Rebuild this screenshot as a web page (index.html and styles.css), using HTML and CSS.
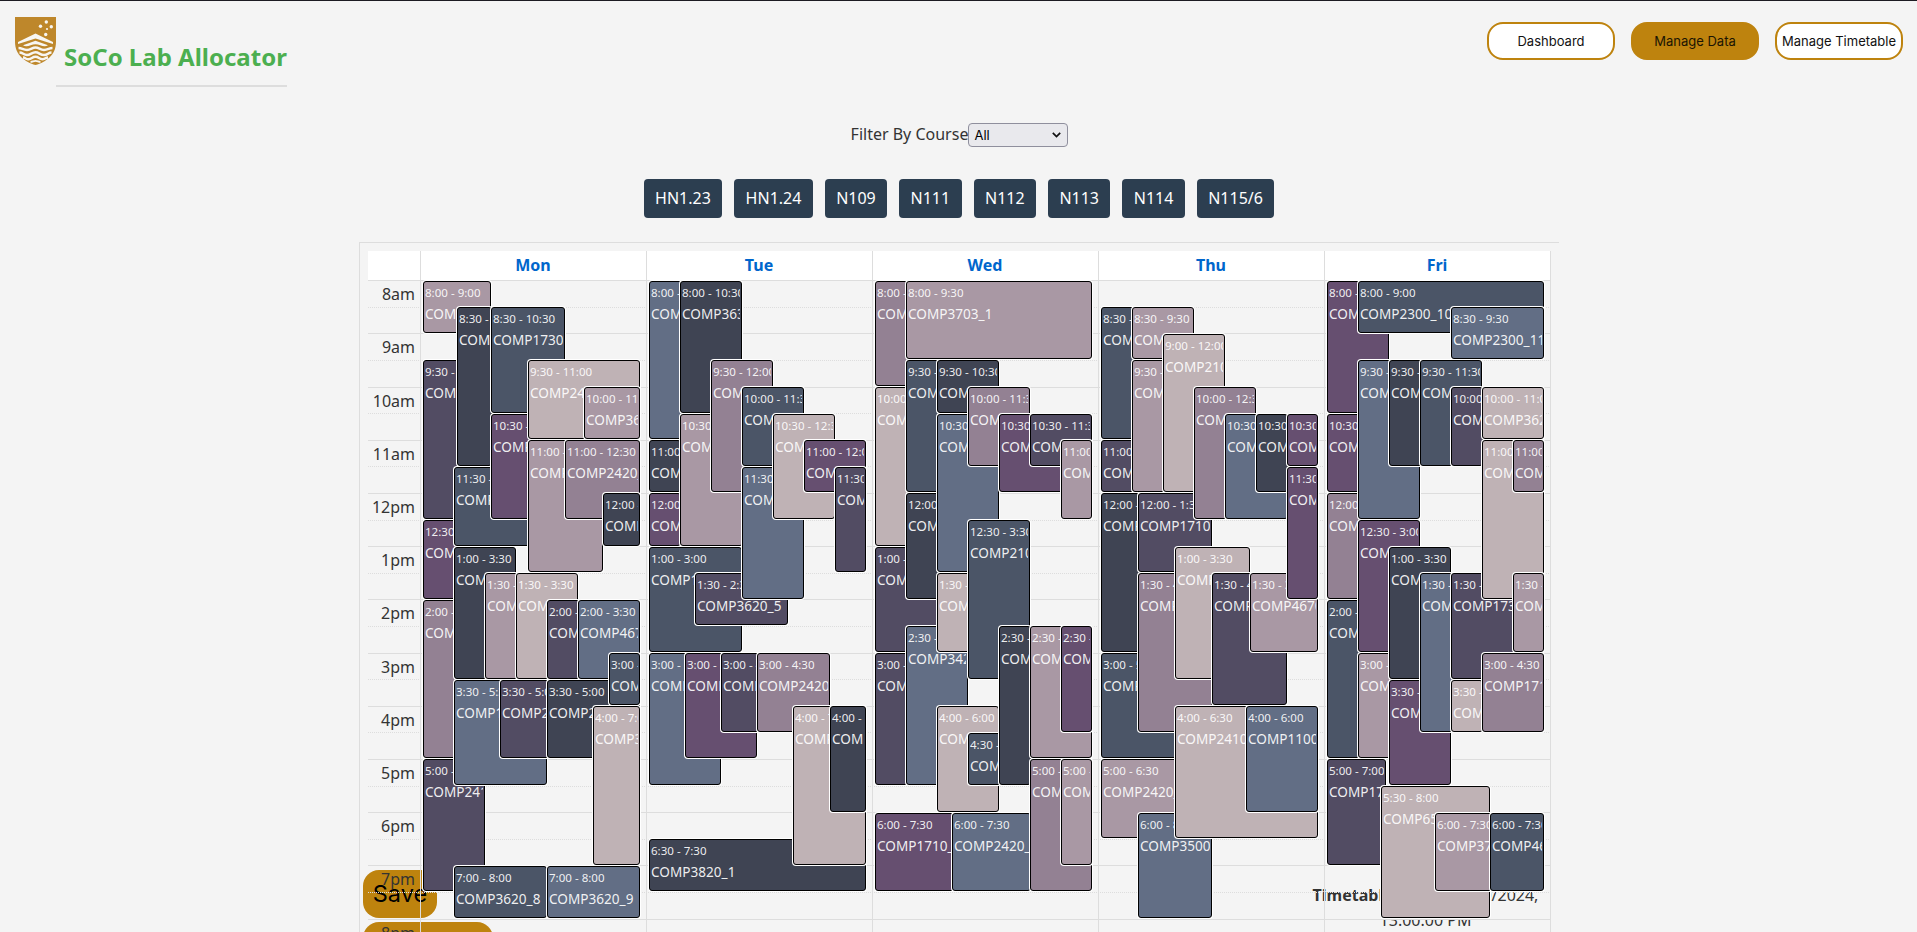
FILE: index.html
```html
<!DOCTYPE html>
<html lang="en">
<head>
<meta charset="utf-8">
<title>SoCo Lab Allocator</title>
<link rel="stylesheet" href="styles.css">
</head>
<body>
<header class="topbar">
  <svg class="logo" viewBox="0 0 41 48" width="41" height="48" aria-hidden="true">
    <path d="M0 0H41V25C41 38 31 45 20.5 48C10 45 0 38 0 25Z" fill="#be872b"/>
    <g fill="#f8f6f2">
      <circle cx="31.3" cy="5" r="1.7"/><circle cx="25.5" cy="9.2" r="1.7"/><circle cx="36.3" cy="9.8" r="1.7"/><circle cx="32" cy="12" r="1.1"/><circle cx="30.7" cy="17.5" r="1.7"/>
      <path d="M20.5 16.5L38 25V27L30 24.5L20.5 21.5L11 24.5L3 27V25Z"/>
      <path d="M8 28.200L20.500 23.800L33 28.200C29 31 25 27.200 20.500 27.200S12 31 8 28.200Z"/>
    </g>
    <g fill="none" stroke="#f8f6f2" stroke-width="2.5" stroke-linejoin="round">
      <path d="M3.5 31C7 31 8 33 12 33S17 30.500 20.500 30.500S25 33 29 33S34 31 37.500 31"/>
      <path d="M4.500 35.500C8 35.500 8.500 38 12 38S17 35.300 20.500 35.300S25 38 29 38S33 35.500 36.500 35.500"/>
      <path d="M8 40.500C11 40.500 10 42.500 13.500 42.200S17 39.800 20.500 39.800S24 42.200 27.500 42.200S30 40.500 33 40.500"/>
      <path d="M15.500 44.800C18 44.800 18 43.800 20.500 43.800S23 44.800 25.500 44.800" stroke-width="1.800"/>
    </g>
  </svg>
  <h1 class="brand">SoCo Lab Allocator</h1>
  <nav class="nav">
    <button class="nav-btn">Dashboard</button>
    <button class="nav-btn active">Manage Data</button>
    <button class="nav-btn">Manage Timetable</button>
  </nav>
</header>
<div class="filter">
  <span class="filter-label">Filter By Course</span>
  <div class="select"><span>All</span><svg width="9" height="6" viewBox="0 0 9 6"><path d="M.8 .8L4.500 4.600L8.200 .8" fill="none" stroke="#111" stroke-width="1.700"/></svg></div>
</div>
<div class="rooms">
  <button class="room">HN1.23</button><button class="room">HN1.24</button><button class="room">N109</button><button class="room">N111</button><button class="room">N112</button><button class="room">N113</button><button class="room">N114</button><button class="room">N115/6</button>
</div>
<main class="stage">
  <div class="save-btn">Save</div>
  <div class="save-btn second"></div>
  <div class="stamp"><b>Timetable</b> saved: 10/10/2024,<br>13:00:00 PM</div>
  <section class="calendar">
    <div class="head">
      <div class="axis-head"></div><div>Mon</div><div>Tue</div><div>Wed</div><div>Thu</div><div>Fri</div>
    </div>
    <div class="body">
      <div class="slots" id="slots"></div>
      <div class="cols" id="cols"></div>
    </div>
  </section>
</main>
<script src="app.js"></script>
</body>
</html>
```
FILE: styles.css
```css
* { box-sizing: border-box; }
html { overflow: hidden; }
body {
  margin: 0;
  height: 932px;
  overflow: hidden;
  border-top: 1px solid #1c1b22;
  background: #f4f4f4;
  color: #333;
  font: 16px/1.6 "Noto Sans", "Open Sans", sans-serif;
}
button { font: inherit; margin: 0; }

.topbar { display: flex; align-items: flex-start; height: 106px; padding: 16px 14px 0 15px; }
.logo { display: block; flex: none; }
.brand {
  margin: 21px 0 0;
  padding: 0 0 9px 8px;
  border-bottom: 2px solid #ddd;
  color: #4caf50;
  font-size: 24px;
  line-height: 38px;
  font-weight: 700;
  white-space: nowrap;
}
.nav { display: flex; gap: 16px; margin: 5px 0 0 auto; }
.nav-btn {
  width: 128px;
  height: 38px;
  padding: 0;
  border: 2px solid #be830e;
  border-radius: 16px;
  background: #fff;
  color: #111;
  font: 13px Inter, sans-serif;
  white-space: nowrap;
}
.nav-btn.active { background: #be830e; color: #1b1503; }

.filter { display: flex; justify-content: center; align-items: center; height: 56px; padding-left: 2px; }
.select {
  display: flex;
  align-items: center;
  justify-content: space-between;
  width: 100px;
  height: 24px;
  padding: 0 6px 0 5px;
  border: 1px solid #8f8f9d;
  border-radius: 4px;
  background: #e9e9ed;
  color: #000;
  font: 13px Inter, sans-serif;
}
.rooms { display: flex; justify-content: center; gap: 12px; margin-top: 16px; padding-left: 1px; }
.room {
  height: 39px;
  padding: 0 11.4px;
  border: 0;
  border-radius: 4px;
  background: #2c3e50;
  color: #fff;
}

.stage { position: relative; width: 1200px; margin: 24px 0 0 359px; }
.save-btn {
  position: absolute;
  left: 4px;
  top: 628px;
  width: 74px;
  height: 48px;
  border-radius: 16px;
  background: #be830e;
  color: #000;
  font: 23.5px/48px Inter, sans-serif;
  text-align: center;
}
.save-btn.second { top: 680px; width: 130px; }
.stamp {
  position: absolute;
  left: 949px;
  top: 641px;
  width: 235px;
  line-height: 25px;
  text-align: center;
  white-space: nowrap;
}

.calendar {
  position: relative;
  height: 690px;
  overflow: hidden;
  padding: 8px;
  border: solid #ddd;
  border-width: 1px 0 0 1px;
}
.head {
  display: grid;
  grid-template-columns: 52px repeat(5, 226px);
  width: 1183px;
  height: 30px;
  border-right: 1px solid #ddd;
  border-bottom: 1px solid #ddd;
  background: #fff;
  color: #06c;
  font-weight: 700;
  line-height: 29px;
  text-align: center;
}
.head div + div { border-left: 1px solid #ddd; padding-right: 1px; }
.body { position: relative; width: 1183px; }
.slot { border-bottom: 1px solid #ddd; padding-right: 5px; width: 100%; }
.slot.full { border-bottom: 1px dotted #ddd; }
.slot span { display: block; width: 47px; height: 20px; line-height: 26px; text-align: right; white-space: nowrap; }
.cols {
  position: absolute;
  inset: 0;
  display: grid;
  grid-template-columns: repeat(5, 226px);
  padding-left: 52px;
}
.col { position: relative; border-left: 1px solid #ddd; }
.col:last-child { box-shadow: 1px 0 0 #ddd; }
.event {
  position: absolute;
  overflow: hidden;
  padding: 1px 1px 0;
  border: 1px solid #000;
  border-radius: 3px;
  box-shadow: 0 0 0 1px #fff;
  color: rgba(255, 255, 255, .92);
  font-size: 13.6px;
  line-height: 21.76px;
  white-space: nowrap;
}
.time { overflow: hidden; padding-top: 1px; font-size: 11.56px; line-height: 18.5px; }
.name { overflow: hidden; }
.blue { background: #626e85; }
.slate { background: #4b5567; }
.dark { background: #3f4453; }
.indigo { background: #524c63; }
.plum { background: #664f70; }
.mauve { background: #938193; }
.pink { background: #a998a4; }
.beige { background: #bfb2b5; }
```
FILE: app.js
```js
// Pixel heights of the half-hour rows from 8am
const heights = [27,26,27,27,26,27,26,27,27,26,27,26,27,27,26,27,26,27,27,26,27,26,27,27,27];
const labels = ['8am','9am','10am','11am','12pm','1pm','2pm','3pm','4pm','5pm','6pm','7pm','8pm'];
const slots = document.getElementById('slots');
heights.forEach((h, i) => {
  const row = document.createElement('div');
  row.className = 'slot' + (i % 2 ? '' : ' full');
  row.style.height = h + 'px';
  if (i % 2 === 0) row.innerHTML = '<span>' + labels[i / 2] + '</span>';
  slots.appendChild(row);
});

// start|end|colour|left|right|course, left and right in thirds of a pixel
const days = [
`8:00|9:00|pink|0|204|COMP1100_1
8:30|11:30|dark|102|206|COMP1110_1
8:30|10:30|slate|204|426|COMP1730_2
9:30|12:30|indigo|0|110|COMP2100_1
9:30|11:00|beige|315|651|COMP2420_3
10:00|11:00|pink|483|651|COMP3620_1
10:30|12:30|plum|204|321|COMP1720_1
11:00|1:30|pink|315|540|COMP1730_1
11:00|12:30|mauve|426|651|COMP2420_1
11:30|1:00|slate|93|320|COMP1600_1
12:00|1:00|dark|540|651|COMP1720_2
12:30|2:00|plum|0|101|COMP2310_1
1:00|3:30|dark|93|279|COMP1100_2
1:30|3:30|pink|186|285|COMP1110_2
1:30|3:30|beige|279|465|COMP2400_1
2:00|5:00|mauve|0|101|COMP2100_2
2:00|3:30|indigo|372|471|COMP3600_1
2:00|3:30|blue|465|651|COMP4670_1
3:00|4:00|slate|558|651|COMP3620_2
3:30|5:30|blue|93|372|COMP1100_3
3:30|5:00|indigo|231|381|COMP2420_2
3:30|5:00|dark|372|651|COMP2420_4
4:00|7:00|beige|511|651|COMP3310_1
5:00|7:30|indigo|0|186|COMP2410_1
7:00|8:00|slate|93|372|COMP3620_8
7:00|8:00|blue|372|651|COMP3620_9`,
`8:00|11:00|blue|0|98|COMP1100_4
8:00|10:30|dark|92|278|COMP3630_1
9:30|12:00|mauve|185|371|COMP2100_3
10:00|11:30|slate|278|464|COMP2300_1
10:30|1:00|pink|92|282|COMP1730_3
10:30|12:30|beige|371|557|COMP2420_5
11:00|12:00|dark|0|97|COMP3620_3
11:00|12:00|plum|464|650|COMP2400_2
11:30|2:00|blue|278|464|COMP1720_3
11:30|1:30|indigo|557|650|COMP3600_2
12:00|1:00|plum|0|97|COMP3620_4
1:00|3:00|slate|0|278|COMP1100_5
1:30|2:30|indigo|137|416|COMP3620_5
3:00|5:30|blue|0|215|COMP1110_3
3:00|5:00|plum|107|323|COMP1600_2
3:00|4:30|indigo|215|332|COMP1720_4
3:00|4:30|mauve|323|542|COMP2420_6
4:00|7:00|beige|431|650|COMP1730_4
4:00|6:00|dark|542|650|COM
6:30|7:30|dark|0|650|COMP3820_1`,
`8:00|10:00|mauve|0|98|COMP1100_6
8:00|9:30|pink|92|650|COMP3703_1
9:30|12:00|slate|92|193|COMP1110_4
9:30|10:30|dark|185|371|COMP1600_3
10:00|1:00|beige|0|98|COMP1720_5
10:00|11:30|mauve|278|464|COMP2100_4
10:30|1:30|blue|185|371|COMP2300_2
10:30|12:00|plum|371|568|COMP3600_3
10:30|11:30|indigo|464|650|COMP2400_3
11:00|12:30|pink|557|650|COMP4600_1
12:00|2:00|dark|92|193|COMP1730_5
12:30|3:30|slate|278|464|COMP2100_5
1:00|3:00|indigo|0|193|COMP3620_6
1:30|3:00|beige|185|288|COMP2420_7
2:30|5:30|blue|92|278|COMP3425_1
2:30|5:30|dark|371|468|COMP1100_7
2:30|5:00|pink|464|650|COMP1110_5
2:30|4:30|plum|557|650|COMP1600_4
3:00|5:30|indigo|0|98|COMP1720_6
4:00|6:00|beige|185|371|COMP1730_6
4:30|5:30|slate|278|378|COMP2300_3
5:00|7:30|mauve|464|650|COMP2100_6
5:00|7:00|pink|557|650|COMP2400_4
6:00|7:30|plum|0|238|COMP1710_1
6:00|7:30|blue|231|468|COMP2420_8`,
`8:30|11:00|slate|0|102|COMP1100_8
8:30|9:30|pink|93|279|COMP1110_6
9:00|12:00|beige|186|372|COMP2100_7
9:30|12:00|pink|93|192|COMP1600_5
10:00|12:30|mauve|279|465|COMP1720_7
10:30|12:30|blue|372|562|COMP1730_7
10:30|12:00|dark|465|562|COMP2300_4
10:30|11:30|plum|558|651|COMP2400_5
11:00|12:00|indigo|0|102|COMP3600_4
11:30|2:00|plum|558|651|COMP3620_7
12:00|3:00|dark|0|117|COMP1100_9
12:00|1:30|indigo|111|333|COMP1710_2
1:00|3:30|beige|222|447|COMP1110_7
1:30|4:30|mauve|111|333|COMP1600_6
1:30|4:00|indigo|333|558|COMP1720_8
1:30|3:00|pink|447|651|COMP4670_2
3:00|5:00|slate|0|232|COMP1730_8
4:00|6:30|beige|222|651|COMP2410_2
4:00|6:00|blue|435|651|COMP1100_10
5:00|6:30|pink|0|232|COMP2420_9
6:00|8:00|blue|111|333|COMP3500_1`,
`8:00|10:30|plum|0|185|COMP1100_11
8:00|9:00|slate|92|650|COMP2300_10
8:30|9:30|blue|371|650|COMP2300_11
9:30|12:30|blue|92|278|COMP1110_8
9:30|11:30|dark|185|288|COMP1600_7
9:30|11:30|slate|278|464|COMP1720_9
10:00|11:30|indigo|371|468|COMP1730_9
10:00|11:00|beige|464|650|COMP3620_10
10:30|12:00|plum|0|98|COMP2100_8
11:00|2:00|beige|464|650|COMP2400_6
11:00|12:00|mauve|557|650|COMP3600_5
12:00|2:00|mauve|0|98|COMP1100_12
12:30|3:00|plum|92|278|COMP1110_9
1:00|3:30|dark|185|371|COMP1600_8
1:30|4:30|blue|278|378|COMP1720_10
1:30|3:30|indigo|371|578|COMP1730_10
1:30|3:00|pink|557|650|COMP2300_5
2:00|5:00|slate|0|98|COMP2100_9
3:00|5:00|pink|92|193|COMP2400_7
3:00|4:30|mauve|464|650|COMP1710_3
3:30|5:30|plum|185|371|COMP3600_6
3:30|4:30|beige|371|468|COMP3620_11
5:00|7:00|indigo|0|178|COMP1710_4
5:30|8:00|beige|162|488|COMP6500_1
6:00|7:30|pink|324|500|COMP3703_2
6:00|7:30|slate|489|650|COMP4600_2`
];

// Number of half hours since 8am
function slotOf(t) {
  const [h, m] = t.split(':').map(Number);
  return ((h < 8 ? h + 12 : h) - 8) * 2 + m / 30;
}
function slotEnd(t) {
  return t === '8:00' ? 24 : slotOf(t);
}

const cols = document.getElementById('cols');
days.forEach(text => {
  const col = document.createElement('div');
  col.className = 'col';
  text.split('\n').map(l => l.split('|')).sort((a, b) => a[3] - b[3] || slotOf(a[0]) - slotOf(b[0])).forEach(e => {
    const [start, end, colour, left, right, name] = e;
    const top = Math.round(slotOf(start) * 26.6 - 0.35);
    const bottom = Math.round(slotEnd(end) * 26.6 - 0.35) - 1;
    const x = Math.round(left / 3), r = Math.round(right / 3);
    const el = document.createElement('div');
    el.className = 'event ' + colour;
    el.style.cssText = `top:${top}px;height:${bottom - top}px;left:${x + 2}px;width:${r - x}px`;
    el.innerHTML = `<div class="time">${start} - ${end}</div><div class="name">${name}</div>`;
    col.appendChild(el);
  });
  cols.appendChild(col);
});
```
